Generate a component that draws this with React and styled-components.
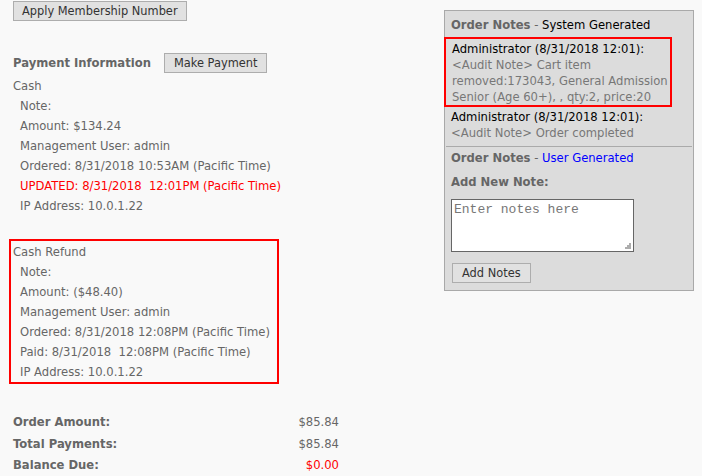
import React from 'react'
import styled, { createGlobalStyle } from 'styled-components'

const GlobalStyle = createGlobalStyle`
  body {
    margin: 0;
    background: #f9f9f9;
    font-family: "DejaVu Sans", Verdana, sans-serif;
    font-size: 11.6px;
    color: #666;
  }
`

const Page = styled.div`
  display: flex;
  align-items: flex-start;
  width: 702px;
  height: 476px;
  overflow: hidden;
`

const LeftColumn = styled.div`
  width: 435px;
  padding: 1px 0 0 9px;
`

const GreyButton = styled.button`
  height: 20px;
  padding: 0 ${(p) => p.$pad || 9}px;
  background: #e1e1e1;
  border: 1px solid #adadad;
  color: #333;
  font-family: inherit;
  font-size: 11.4px;
  line-height: 18px;
  cursor: pointer;
`

const TopBar = styled.div`
  padding-left: 4px;
`

const HeadingRow = styled.div`
  display: flex;
  align-items: center;
  gap: 13px;
  margin-top: 32px;
  padding-left: 4px;
  height: 20px;
`

const Heading = styled.span`
  font-weight: bold;
`

const PaymentBlock = styled.div`
  width: 270px;
  box-sizing: border-box;
  border: 2px solid ${(p) => (p.$flagged ? '#ff0000' : 'transparent')};
  padding: 1px 2px 0;
  margin-bottom: 21px;
`

const Line = styled.div`
  height: 20px;
  line-height: 20px;
  white-space: nowrap;
  padding-left: ${(p) => (p.$sub ? 7 : 0)}px;
  color: ${(p) => (p.$alert ? '#ff0000' : 'inherit')};
`

const Totals = styled.div`
  width: 326px;
  margin-top: 27px;
  padding-left: 4px;
`

const TotalRow = styled.div`
  display: flex;
  justify-content: space-between;
  align-items: center;
  height: ${(p) => p.$h || 21}px;
`

const TotalLabel = styled.span`
  font-weight: bold;
`

const TotalValue = styled.span`
  color: ${(p) => (p.$alert ? '#ff0000' : 'inherit')};
`

const NotesPanel = styled.div`
  width: 250px;
  box-sizing: border-box;
  margin-top: 10px;
  background: #dcdcdc;
  border: 1px solid #a9a9a9;
  padding-bottom: 7px;
`

const PanelTitle = styled.div`
  height: 26px;
  line-height: 28px;
  padding-left: 6px;
`

const TitleStrong = styled.span`
  font-weight: bold;
`

const TitleTag = styled.span`
  color: ${(p) => p.$color};
`

const NoteEntry = styled.div`
  width: ${(p) => (p.$flagged ? '228px' : 'auto')};
  box-sizing: border-box;
  margin-left: ${(p) => (p.$flagged ? -1 : 0)}px;
  border: ${(p) => (p.$flagged ? '2px solid #ff0000' : 'none')};
  padding: ${(p) => (p.$flagged ? '2px 2px 0 6px' : '2px 6px 0')};
  line-height: 16px;
`

const NoteAuthor = styled.div`
  color: #000;
`

const NoteBody = styled.div`
  color: #777;
`

const Divider = styled.hr`
  margin: 5px 1px 3px;
  border: 0;
  border-top: 1px solid #aaa;
`

const SubTitle = styled.div`
  line-height: 16px;
  padding-left: 6px;
  margin-top: ${(p) => p.$top || 0}px;
`

const InputWrap = styled.div`
  position: relative;
  width: 183px;
  margin: 9px 0 0 6px;
`

const NoteInput = styled.textarea`
  display: block;
  width: 183px;
  height: 53px;
  box-sizing: border-box;
  border: 1px solid #666;
  padding: 2px;
  background: #fff;
  resize: none;
  font-family: "Liberation Mono", monospace;
  font-size: 13px;
  &::placeholder {
    color: #777;
  }
`

/* dotted resize grip in the textarea's corner */
const Grip = styled.span`
  position: absolute;
  right: 3px;
  bottom: 3px;
  width: 6px;
  height: 6px;
  background:
    linear-gradient(#999, #999) 4px 0 / 2px 2px no-repeat,
    linear-gradient(#999, #999) 2px 2px / 2px 2px no-repeat,
    linear-gradient(#999, #999) 4px 2px / 2px 2px no-repeat,
    linear-gradient(#999, #999) 0 4px / 2px 2px no-repeat,
    linear-gradient(#999, #999) 2px 4px / 2px 2px no-repeat,
    linear-gradient(#999, #999) 4px 4px / 2px 2px no-repeat;
  opacity: 0.8;
  pointer-events: none;
`

const ButtonRow = styled.div`
  margin: 11px 0 0 7px;
`

const cashLines = [
  { text: 'Note:' },
  { text: 'Amount: $134.24' },
  { text: 'Management User: admin' },
  { text: 'Ordered: 8/31/2018 10:53AM (Pacific Time)' },
  { text: 'UPDATED: 8/31/2018\u00a0 12:01PM (Pacific Time)', alert: true },
  { text: 'IP Address: 10.0.1.22' },
]

const refundLines = [
  { text: 'Note:' },
  { text: 'Amount: ($48.40)' },
  { text: 'Management User: admin' },
  { text: 'Ordered: 8/31/2018 12:08PM (Pacific Time)' },
  { text: 'Paid: 8/31/2018\u00a0 12:08PM (Pacific Time)' },
  { text: 'IP Address: 10.0.1.22' },
]

const Payment = ({ title, lines, flagged }) => (
  <PaymentBlock $flagged={flagged}>
    <Line>{title}</Line>
    {lines.map((l) => (
      <Line key={l.text} $sub $alert={l.alert}>{l.text}</Line>
    ))}
  </PaymentBlock>
)

export default function App() {
  return (
    <Page>
      <GlobalStyle />
      <LeftColumn>
        <TopBar>
          <GreyButton $pad={8}>Apply Membership Number</GreyButton>
        </TopBar>
        <HeadingRow>
          <Heading>Payment Information</Heading>
          <GreyButton>Make Payment</GreyButton>
        </HeadingRow>
        <Payment title="Cash" lines={cashLines} />
        <Payment title="Cash Refund" lines={refundLines} flagged />
        <Totals>
          <TotalRow $h={22}>
            <TotalLabel>Order Amount:</TotalLabel>
            <TotalValue>$85.84</TotalValue>
          </TotalRow>
          <TotalRow>
            <TotalLabel>Total Payments:</TotalLabel>
            <TotalValue>$85.84</TotalValue>
          </TotalRow>
          <TotalRow>
            <TotalLabel>Balance Due:</TotalLabel>
            <TotalValue $alert>$0.00</TotalValue>
          </TotalRow>
        </Totals>
      </LeftColumn>

      <NotesPanel>
        <PanelTitle>
          <TitleStrong>Order Notes</TitleStrong> - <TitleTag $color="#000">System Generated</TitleTag>
        </PanelTitle>
        <NoteEntry $flagged>
          <NoteAuthor>Administrator (8/31/2018 12:01):</NoteAuthor>
          <NoteBody>&lt;Audit Note&gt; Cart item removed:173043, General Admission Senior (Age 60+), , qty:2, price:20</NoteBody>
        </NoteEntry>
        <NoteEntry>
          <NoteAuthor>Administrator (8/31/2018 12:01):</NoteAuthor>
          <NoteBody>&lt;Audit Note&gt; Order completed</NoteBody>
        </NoteEntry>
        <Divider />
        <SubTitle>
          <TitleStrong>Order Notes</TitleStrong> - <TitleTag $color="#0000ff">User Generated</TitleTag>
        </SubTitle>
        <SubTitle $top={8}>
          <TitleStrong>Add New Note:</TitleStrong>
        </SubTitle>
        <InputWrap>
          <NoteInput placeholder="Enter notes here" />
          <Grip />
        </InputWrap>
        <ButtonRow>
          <GreyButton>Add Notes</GreyButton>
        </ButtonRow>
      </NotesPanel>
    </Page>
  )
}
